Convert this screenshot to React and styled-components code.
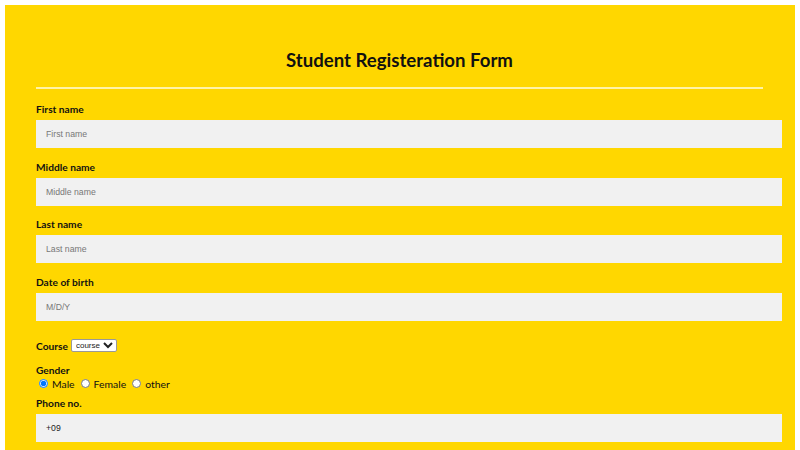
import styled, { createGlobalStyle } from 'styled-components'

const GlobalStyle = createGlobalStyle`
  body {
    margin: 5px 5px 0 5px;
    background: #ffffff;
    font-family: Lato, 'Noto Sans', sans-serif;
  }
`

const fields = [
  { id: 'first', label: 'First name', placeholder: 'First name' },
  { id: 'middle', label: 'Middle name', placeholder: 'Middle name' },
  { id: 'last', label: 'Last name', placeholder: 'Last name' },
  { id: 'dob', label: 'Date of birth', placeholder: 'M/D/Y' },
]

function App() {
  return (
    <>
      <GlobalStyle />
      <Wrapper>
        <Title>Student Registeration Form</Title>
        <Divider />
        {fields.map((f) => (
          <Field key={f.id}>
            <Label htmlFor={f.id}>{f.label}</Label>
            <Input id={f.id} type='text' placeholder={f.placeholder} />
          </Field>
        ))}
        <CourseRow>
          <Label htmlFor='course' $inline>Course</Label>
          <Select id='course' defaultValue='course'>
            <option value='course'>course</option>
            <option value='bca'>BCA</option>
            <option value='bba'>BBA</option>
            <option value='btech'>B.Tech</option>
          </Select>
        </CourseRow>
        <Label as='div'>Gender</Label>
        <RadioRow>
          <RadioOption>
            <Radio type='radio' name='gender' value='male' defaultChecked />
            Male
          </RadioOption>
          <RadioOption>
            <Radio type='radio' name='gender' value='female' />
            Female
          </RadioOption>
          <RadioOption>
            <Radio type='radio' name='gender' value='other' />
            other
          </RadioOption>
        </RadioRow>
        <Field>
          <Label htmlFor='phone'>Phone no.</Label>
          <Input id='phone' type='text' defaultValue='+09' />
        </Field>
      </Wrapper>
    </>
  )
}

const Wrapper = styled.div`
  background: #ffd700;
  height: 445px;
  overflow: hidden;
  padding: 40px 13px 0 31px;
  box-sizing: border-box;
`

const Title = styled.h1`
  margin: 0 19px 0 0;
  font-size: 18.6px;
  line-height: 30px;
  font-weight: 700;
  text-align: center;
  color: #111;
`

const Divider = styled.hr`
  margin: 12px 19px 13px 0;
  border: none;
  border-top: 2px solid #fff3a6;
  height: 0;
`

const Field = styled.div`
  display: flex;
  flex-direction: column;
  gap: 4px;
  margin-bottom: 11.5px;
`

const Label = styled.label`
  display: ${(p) => (p.$inline ? 'inline-block' : 'block')};
  font-size: 10.2px;
  line-height: 14px;
  font-weight: 700;
  color: #111;
`

const Input = styled.input`
  box-sizing: border-box;
  width: 100%;
  height: 28px;
  padding: 0 10px;
  border: none;
  outline: none;
  background: #f1f1f1;
  font-family: 'Liberation Sans', Arial, sans-serif;
  font-size: 8.7px;
  color: #222;

  &::placeholder {
    color: #777;
  }
`

const CourseRow = styled.div`
  display: flex;
  align-items: center;
  gap: 3px;
  margin: 18px 0 10px;
  height: 14px;
`

const Select = styled.select`
  width: 46px;
  height: 13px;
  padding: 0;
  font-family: 'Liberation Sans', Arial, sans-serif;
  font-size: 8px;
  border: 1px solid #999;
  border-radius: 2px;
  background: #fff;
  color: #222;
`

const RadioRow = styled.div`
  display: flex;
  align-items: center;
  height: 12px;
  margin: 1px 0 6px 3px;
`

const RadioOption = styled.label`
  display: inline-flex;
  align-items: center;
  font-size: 10.4px;
  color: #111;
  margin-right: 6px;
`

const Radio = styled.input`
  width: 9px;
  height: 9px;
  margin: 0 4px 0 0;
`

export default App
